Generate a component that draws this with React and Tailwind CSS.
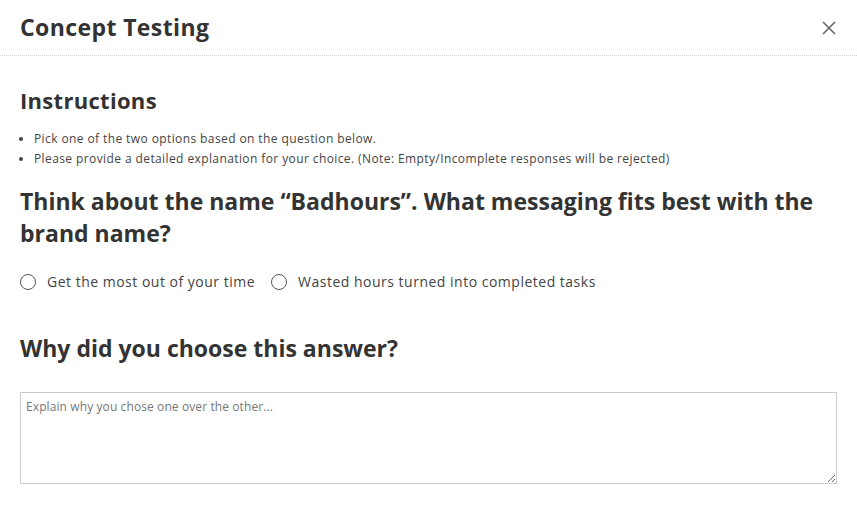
const options = ["Get the most out of your time", "Wasted hours turned into completed tasks"];

export default function App() {
  return (
    <div className="min-h-screen bg-white text-[#333] font-['Open_Sans',sans-serif]">
      <div className="flex items-center justify-between px-5 h-14 border-b border-dotted border-[#d4d4d4]">
        <h1 className="text-[23px] font-bold tracking-[0.4px]">Concept Testing</h1>
        <svg width="14" height="14" viewBox="0 0 14 14" className="mr-[1px] text-[#666]">
          <path d="M1 1L13 13M13 1L1 13" stroke="currentColor" strokeWidth="1.6" />
        </svg>
      </div>
      <div className="px-5 pt-[30px]">
        <h2 className="text-[22px] font-bold leading-7 tracking-[0.3px]">Instructions</h2>
        <ul className="mt-[15px] text-[12px] text-[#444] leading-5 list-disc pl-[14px] tracking-[0.4px]">
          <li>Pick one of the two options based on the question below.</li>
          <li>Please provide a detailed explanation for your choice. (Note: Empty/Incomplete responses will be rejected)</li>
        </ul>
        <h2 className="mt-[16px] text-[23px] font-bold leading-8">
          Think about the name “Badhours”. What messaging fits best with the brand name?
        </h2>
        <div className="mt-[22px] flex items-center gap-4 text-[14px] tracking-[0.5px] text-[#444]">
          {options.map((o) => (
            <label key={o} className="flex items-center gap-[11px]">
              <span className="w-4 h-4 rounded-full border-[1.5px] border-[#555]" />
              {o}
            </label>
          ))}
        </div>
        <h2 className="mt-[42px] text-[23px] font-bold leading-7">Why did you choose this answer?</h2>
        <textarea
          className="mt-[30px] block w-full h-[92px] border border-[#ccc] px-[5px] py-[5px] text-[12px] tracking-[0.1px] text-[#333] placeholder:text-[#777] outline-none"
          placeholder="Explain why you chose one over the other..."
        />
      </div>
    </div>
  );
}
